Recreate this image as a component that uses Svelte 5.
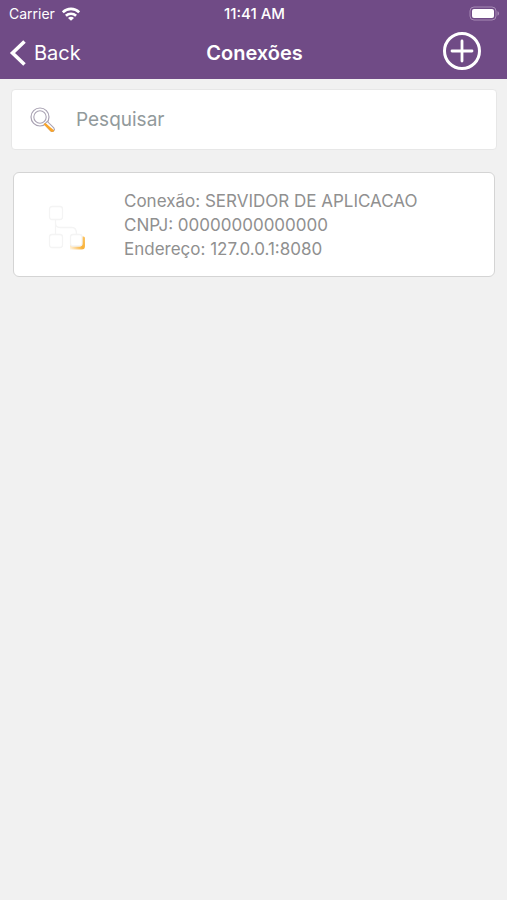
<script>
  let query = $state('');
  const connections = [
    { name: 'SERVIDOR DE APLICACAO', cnpj: '00000000000000', address: '127.0.0.1:8080' }
  ];
  const shown = $derived(
    connections.filter((c) => c.name.toLowerCase().includes(query.toLowerCase()))
  );
</script>

<div class="screen">
  <header>
    <div class="status">
      <div class="carrier">
        <span>Carrier</span>
        <svg width="18" height="14" viewBox="0 0 18 14" fill="none" stroke="#fff" stroke-width="2.6" aria-hidden="true">
          <path d="M0.8 5.3C5.4 0.7 12.6 0.7 17.2 5.3" />
          <path d="M3.9 8.8C6.8 6 11.2 6 14.1 8.8" />
          <path d="M9 13.8L6 10.9C7.7 9.4 10.3 9.4 12 10.9Z" fill="#fff" stroke="none" />
        </svg>
      </div>
      <time>11:41 AM</time>
      <svg class="battery" width="32" height="15" viewBox="0 0 32 15" aria-hidden="true">
        <rect x="2" y="1" width="26" height="13" rx="4" fill="none" stroke="#a78bb5" stroke-width="1" />
        <rect x="4" y="3" width="22" height="9" rx="2" fill="#fff" />
        <path d="M29.5 5.3C31.6 6 31.6 9 29.5 9.7Z" fill="#a78bb5" />
      </svg>
    </div>
    <nav>
      <button class="back">
        <svg width="18" height="28" viewBox="0 0 18 28" fill="none" stroke="#fff" stroke-width="3.6" aria-hidden="true">
          <path d="M15.5 2.5L3.5 14L15.5 25.5" />
        </svg>
        <span>Back</span>
      </button>
      <h1>Conexões</h1>
      <button class="add" aria-label="Adicionar">
        <svg width="40" height="40" viewBox="0 0 40 40" fill="none" stroke="#fff" aria-hidden="true">
          <circle cx="20" cy="20" r="17.5" stroke-width="3" />
          <path d="M20 10V30M10 20H30" stroke-width="2.8" stroke-linecap="round" />
        </svg>
      </button>
    </nav>
  </header>

  <main>
    <label class="search">
      <svg width="26" height="26" viewBox="0 0 26 26" fill="none" aria-hidden="true">
        <circle cx="10" cy="10" r="9" stroke="#a9a2b3" stroke-width="1.2" />
        <circle cx="10" cy="10" r="6.2" stroke="#a9a2b3" stroke-width="1.1" />
        <path d="M14.4 17.2L20.8 23.8C22.8 25.6 25.6 23 23.8 20.8L17.3 14.4Z" fill="#fff" stroke="#a9a2b3" stroke-width="1.1" />
        <path d="M13.4 17L20.4 24.2C21.7 25.4 23.6 24.9 24.4 23.5L20.6 20.6L15.6 16Z" fill="#f9a52b" />
      </svg>
      <input type="text" placeholder="Pesquisar" aria-label="Pesquisar" bind:value={query} />
    </label>

    {#each shown as c}
      <article>
        <svg width="38" height="46" viewBox="0 0 38 46" fill="none" stroke="#f4f4f4" stroke-width="1.3" aria-hidden="true">
          <defs>
            <linearGradient id="corner" x1="20" y1="44" x2="37" y2="32" gradientUnits="userSpaceOnUse">
              <stop offset="0.1" stop-color="#fff3df" />
              <stop offset="0.6" stop-color="#f9b137" />
              <stop offset="1" stop-color="#fbc566" />
            </linearGradient>
          </defs>
          <rect x="1.5" y="1.5" width="13" height="13" rx="2.5" />
          <rect x="1.5" y="29.5" width="13" height="13" rx="2.5" />
          <path d="M7.5 14.5V29.5M7.5 18C7.5 21 9 22.5 12 22.5H24C27 22.5 28.5 24.5 28.5 29" />
          <path d="M33 31.5H35.5Q37 31.5 37 33V41C37 43.5 36 44.5 33.5 44.5H22V40H33Z" fill="url(#corner)" stroke="none" />
          <rect x="22.5" y="29.5" width="11.5" height="11.5" rx="2.5" fill="#fff" />
        </svg>
        <div class="details">
          <p>Conexão: {c.name}</p>
          <p>CNPJ: {c.cnpj}</p>
          <p>Endereço: {c.address}</p>
        </div>
      </article>
    {/each}
  </main>
</div>

<style>
  :global(body) {
    background: #f1f1f1;
  }
  .screen {
    min-height: 100vh;
    background: #f1f1f1;
    font-family: Inter, "Liberation Sans", sans-serif;
  }
  header {
    background: #704b86;
    color: #fff;
    height: 79px;
  }
  .status,
  nav {
    display: grid;
    grid-template-columns: 1fr auto 1fr;
    align-items: center;
    padding: 0 7px 0 9px;
  }
  .status {
    height: 27px;
    font-size: 14px;
  }
  .carrier {
    display: flex;
    align-items: center;
    gap: 7px;
  }
  time {
    font-size: 15px;
    font-weight: 500;
  }
  .battery,
  .add {
    justify-self: end;
  }
  nav {
    height: 52px;
  }
  button {
    display: flex;
    align-items: center;
    padding: 0;
    border: 0;
    background: none;
    color: inherit;
    font: inherit;
    cursor: pointer;
  }
  .back {
    gap: 7px;
    font-size: 20px;
  }
  .add {
    margin: 0 18px 4px 0;
  }
  h1 {
    margin: 0;
    font-size: 20px;
    font-weight: 600;
  }
  main {
    padding: 10px 10px 0 11px;
  }
  .search {
    display: flex;
    align-items: center;
    gap: 20px;
    height: 59px;
    padding: 0 18px;
    background: #fff;
    border: 1px solid #e7e7e7;
    border-radius: 4px;
  }
  input {
    flex: 1;
    min-width: 0;
    padding: 0;
    border: 0;
    outline: 0;
    background: none;
    color: #555;
    font: 19px Inter, "Liberation Sans", sans-serif;
  }
  input::placeholder {
    color: #929a9c;
    opacity: 1;
  }
  article {
    display: flex;
    align-items: center;
    gap: 38px;
    margin: 22px 2px 0;
    padding: 16px 34px 15px;
    background: #fff;
    border: 1px solid #d4d4d4;
    border-radius: 6px;
  }
  article svg {
    margin-top: 5px;
  }
  p {
    margin: 0;
    color: #909090;
    font-size: 17px;
    line-height: 24px;
  }
</style>
